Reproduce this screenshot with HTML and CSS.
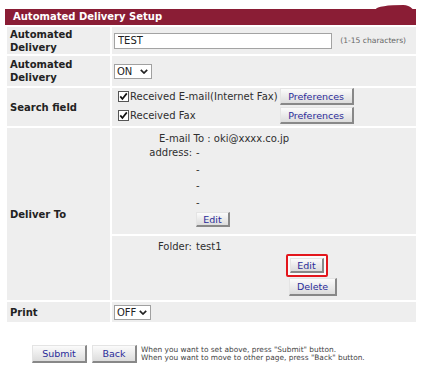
FILE: index.html
```html
<!DOCTYPE html>
<html lang="en">
<head>
    <meta charset="UTF-8">
    <title>Automated Delivery Setup</title>
    <link rel="stylesheet" href="styles.css">
</head>
<body>
    <div class="panel">
        <div class="title">Automated Delivery Setup</div>
        <table class="form">
            <tr class="row-name">
                <th>Automated Delivery</th>
                <td>
                    <input class="text-input" type="text" value="TEST">
                    <span class="hint">(1-15 characters)</span>
                </td>
            </tr>
            <tr class="row-switch">
                <th>Automated Delivery</th>
                <td>
                    <span class="select select-on">ON
                        <svg width="8" height="5" viewBox="0 0 8 5"><path d="M0.8 0.8L4 4L7.2 0.8" fill="none" stroke="#222" stroke-width="1.7"/></svg>
                    </span>
                </td>
            </tr>
            <tr class="row-search">
                <th>Search field</th>
                <td class="search-cell">
                    <div class="search-grid">
                        <label class="check-label">
                            <svg class="check" width="11" height="11" viewBox="0 0 11 11"><rect x="0.5" y="0.5" width="10" height="10" fill="#fff" stroke="#555"/><path d="M2.3 5.4L4.4 8L8.8 2.4" fill="none" stroke="#111" stroke-width="1.7"/></svg>
                            Received E-mail(Internet Fax)
                        </label>
                        <button class="btn btn-pref">Preferences</button>
                        <label class="check-label">
                            <svg class="check" width="11" height="11" viewBox="0 0 11 11"><rect x="0.5" y="0.5" width="10" height="10" fill="#fff" stroke="#555"/><path d="M2.3 5.4L4.4 8L8.8 2.4" fill="none" stroke="#111" stroke-width="1.7"/></svg>
                            Received Fax
                        </label>
                        <button class="btn btn-pref">Preferences</button>
                    </div>
                </td>
            </tr>
            <tr class="row-deliver">
                <th>Deliver To</th>
                <td class="deliver-cell">
                    <div class="sub sub-mail">
                        <div class="addr-head">E-mail To : oki@xxxx.co.jp</div>
                        <div class="addr-row"><span class="addr-label">address:</span><span>-</span></div>
                        <div class="addr-row spaced"><span class="addr-label"></span><span>-</span></div>
                        <div class="addr-row spaced"><span class="addr-label"></span><span>-</span></div>
                        <div class="addr-row spaced"><span class="addr-label"></span><span>-</span></div>
                        <div class="addr-row spaced"><span class="addr-label"></span><button class="btn btn-edit">Edit</button></div>
                    </div>
                    <div class="sub sub-folder">
                        <div class="addr-row"><span class="addr-label">Folder:</span><span>test1</span></div>
                        <div class="focus-ring"><button class="btn btn-edit">Edit</button></div>
                        <button class="btn btn-delete">Delete</button>
                    </div>
                </td>
            </tr>
            <tr class="row-print">
                <th>Print</th>
                <td>
                    <span class="select select-off">OFF
                        <svg width="8" height="5" viewBox="0 0 8 5"><path d="M0.8 0.8L4 4L7.2 0.8" fill="none" stroke="#222" stroke-width="1.7"/></svg>
                    </span>
                </td>
            </tr>
        </table>

        <div class="footer">
            <button class="btn btn-submit">Submit</button>
            <button class="btn btn-back">Back</button>
            <div class="footer-note">
                When you want to set above, press "Submit" button.<br>
                When you want to move to other page, press "Back" button.
            </div>
        </div>
    </div>
</body>
</html>
```

FILE: styles.css
```css
body {
    margin: 0;
    font-family: "DejaVu Sans", Verdana, sans-serif;
    font-size: 10px;
    color: #2e2e2e;
    background-color: #fff;
}

.panel {
    padding: 9px 0 0 5px;
    width: 413px;
}

.title {
    position: relative;
    box-sizing: border-box;
    width: 411px;
    height: 16px;
    line-height: 16px;
    padding-left: 8px;
    background-color: #8a1d35;
    color: #fff;
    font-weight: bold;
}

/* raised rounded tab end on the right */
.title::after {
    content: "";
    position: absolute;
    right: 0;
    top: -4px;
    bottom: 0;
    width: 40px;
    background-color: #8a1d35;
    border-radius: 28px 13px 0 0 / 4px 13px 0 0;
}

.form {
    border-collapse: separate;
    border-spacing: 2px;
    width: 413px;
    table-layout: fixed;
}

.form th,
.form td {
    box-sizing: border-box;
    padding: 0 2px;
    background-color: #eee;
    vertical-align: middle;
}

.form th {
    width: 103px;
    padding: 0 3px;
    text-align: left;
    font-weight: bold;
    line-height: 13px;
    color: #222;
}

.row-name { height: 27px; }
.row-switch { height: 30px; }
.row-search { height: 38px; }
.row-print { height: 20px; }

.text-input {
    box-sizing: border-box;
    width: 218px;
    height: 16px;
    margin: 0;
    padding: 0 3px;
    border: 1px solid #a3a3a3;
    font-family: inherit;
    font-size: 10px;
    color: #222;
    vertical-align: middle;
}

.hint {
    margin-left: 5px;
    font-size: 7.6px;
    color: #666;
    vertical-align: middle;
}

.select {
    display: inline-flex;
    align-items: center;
    justify-content: space-between;
    box-sizing: border-box;
    height: 15px;
    padding: 0 3px 0 2px;
    border: 1px solid #a0a0a0;
    background-color: #fff;
    color: #222;
    vertical-align: middle;
}

.select-on { width: 38px; }
.select-off { width: 37px; }

.search-cell {
    vertical-align: top !important;
}

.search-grid {
    display: grid;
    grid-template-columns: auto auto;
    justify-content: start;
    column-gap: 2px;
    row-gap: 2px;
}

.check-label {
    display: flex;
    align-items: center;
    gap: 1px;
}

.check {
    margin-left: 4px;
}

.btn {
    box-sizing: border-box;
    height: 17px;
    margin: 0;
    padding: 0;
    font-family: inherit;
    font-size: 9.5px;
    color: #2b2b99;
    background: linear-gradient(#fbfbfb, #dcdcdc);
    border-style: solid;
    border-width: 1px 2px 2px 1px;
    border-color: #e4e4e4 #888 #888 #e4e4e4;
}

.btn-pref { width: 74px; }
.btn-edit { width: 34px; height: 15px; }
.btn-delete { width: 48px; height: 18px; margin: 1px 0 0 177px; display: block; }
.btn-submit { width: 55px; height: 18px; }
.btn-back { width: 45px; height: 18px; }

.deliver-cell {
    padding: 0 !important;
    background-color: #fff !important;
    vertical-align: top !important;
}

.sub {
    box-sizing: border-box;
    padding-top: 4px;
    background-color: #eee;
}

.sub-mail { height: 106px; }
.sub-folder { height: 64px; margin-top: 2px; }

.addr-head {
    padding-left: 47px;
    line-height: 14px;
}

.addr-row {
    display: flex;
    gap: 4px;
    line-height: 14px;
}

.addr-row.spaced {
    margin-top: 2.5px;
}

.addr-label {
    width: 80px;
    flex: none;
    text-align: right;
}

.focus-ring {
    display: inline-block;
    margin-left: 174px;
    padding: 2px;
    border: 2px solid #e3161c;
    border-radius: 2px;
    background-color: #fafafa;
    line-height: 0;
}

.footer {
    display: flex;
    align-items: center;
    gap: 5px;
    margin-top: 21px;
    padding-left: 27px;
}

.footer-note {
    margin-left: -1px;
    font-size: 7.4px;
    line-height: 8px;
    color: #444;
}
```
